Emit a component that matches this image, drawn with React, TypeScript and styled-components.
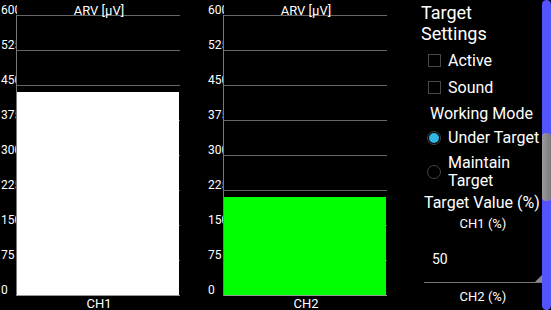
import React from 'react'
import styled, { createGlobalStyle } from 'styled-components'

const GlobalStyle = createGlobalStyle`
  html, body {
    margin: 0;
    padding: 0;
    background: #000;
  }
  body {
    font-family: Roboto, "Noto Sans", sans-serif;
    color: #fff;
  }
`

const Screen = styled.div`
  display: flex;
  width: 551px;
  height: 310px;
  overflow: hidden;
  background: #000;
`

const ChartPanel = styled.div`
  width: 207px;
  flex: none;
  display: flex;
  flex-direction: column;
`

const ChartTitle = styled.div`
  height: 15px;
  line-height: 21px;
  font-size: 13px;
  margin-left: 17px;
  width: 164px;
  text-align: center;
  white-space: nowrap;
  position: relative;
  z-index: 1;
`

const ChartBody = styled.div`
  display: flex;
  height: 296px;
  margin-top: -15px;
`

const YAxis = styled.div`
  width: 17px;
  height: 296px;
  padding: 3px 0 0 1px;
  box-sizing: border-box;
  overflow: hidden;
  flex: none;
`

const YLabel = styled.div`
  height: 35px;
  line-height: 15px;
  font-size: 12px;
  white-space: nowrap;
`

const Plot = styled.div`
  position: relative;
  width: 163px;
  height: 280px;
  margin: 15px 0 0 -1px;
  border-left: 1px solid #777;
  border-bottom: 1px solid #999;
  background: #000;
  display: flex;
  flex-direction: column;
`

const GridRow = styled.div`
  height: 34px;
  border-top: 1px solid #666;
`

const Bar = styled.div<{ $color: string }>`
  position: absolute;
  left: 0;
  right: 1px;
  bottom: 0;
  background: ${p => p.$color};
`

const ChannelLabel = styled.div`
  margin-left: 17px;
  width: 164px;
  text-align: center;
  font-size: 13px;
  line-height: 16px;
`

const Settings = styled.div`
  width: 128px;
  flex: none;
  display: flex;
  flex-direction: column;
`

const SettingsTitle = styled.div`
  font-size: 18px;
  line-height: 21px;
  margin: 2px 0 0 7px;
  height: 45px;
`

const CheckRow = styled.div`
  display: flex;
  align-items: center;
  height: 27px;
  padding-left: 14px;
  font-size: 16px;
  gap: 7px;
`

const CheckBox = styled.span`
  width: 11px;
  height: 11px;
  border: 1.5px solid #484848;
  flex: none;
`

const SectionLabel = styled.div<{ $indent: number }>`
  font-size: 16px;
  line-height: ${p => (p.$indent === 16 ? 25 : 20)}px;
  padding-left: ${p => p.$indent}px;
  white-space: nowrap;
`

const RadioRow = styled.div<{ $tall?: boolean }>`
  display: flex;
  align-items: center;
  gap: 7px;
  padding-left: 13px;
  font-size: 16px;
  line-height: ${p => (p.$tall ? 18 : 23)}px;
  padding-top: ${p => (p.$tall ? 5 : 0)}px;
  padding-bottom: ${p => (p.$tall ? 3 : 0)}px;
`

const Radio = styled.span<{ $checked?: boolean }>`
  width: 12px;
  height: 12px;
  border-radius: 50%;
  border: 1.5px solid #444;
  flex: none;
  display: flex;
  align-items: center;
  justify-content: center;
  &::after {
    content: '';
    width: 10px;
    height: 10px;
    border-radius: 50%;
    background: ${p => (p.$checked ? '#33b5e5' : 'transparent')};
  }
`

const FieldLabel = styled.div<{ $top: number }>`
  margin: ${p => p.$top}px 0 0 10px;
  text-align: center;
  font-size: 13px;
  line-height: 16px;
`

const Field = styled.div`
  position: relative;
  margin-left: 10px;
  padding: 17px 0 13px 8px;
  font-size: 14px;
  line-height: 20px;
  border-bottom: 1px solid #777;
`

const Corner = styled.svg`
  position: absolute;
  right: 0;
  bottom: 0;
`

const ScrollTrack = styled.div`
  width: 9px;
  flex: none;
  height: 310px;
  border-radius: 5px;
  background: #5353ff;
  display: flex;
  flex-direction: column;
`

const ScrollThumb = styled.div`
  margin-top: 133px;
  height: 68px;
  border-radius: 4px;
  background: linear-gradient(90deg, #9a9a9a, #7a7a7a);
`

const TICKS = [600, 525, 450, 375, 300, 225, 150, 75, 0]

const Chart = ({ name, value, color }: { name: string; value: number; color: string }) => (
  <ChartPanel>
    <ChartTitle>ARV [µV]</ChartTitle>
    <ChartBody>
      <YAxis>
        {TICKS.map(t => (
          <YLabel key={t}>{t}</YLabel>
        ))}
      </YAxis>
      <Plot>
        {TICKS.slice(1).map(t => (
          <GridRow key={t} />
        ))}
        <Bar $color={color} style={{ height: `${(value / 600) * 280}px` }} />
      </Plot>
    </ChartBody>
    <ChannelLabel>{name}</ChannelLabel>
  </ChartPanel>
)

export default function App() {
  return (
    <>
      <GlobalStyle />
      <Screen>
        <Chart name="CH1" value={435} color="#ffffff" />
        <Chart name="CH2" value={210} color="#00ff00" />
        <Settings>
          <SettingsTitle>
            Target
            <br />
            Settings
          </SettingsTitle>
          <CheckRow>
            <CheckBox />
            Active
          </CheckRow>
          <CheckRow>
            <CheckBox />
            Sound
          </CheckRow>
          <SectionLabel $indent={16}>Working Mode</SectionLabel>
          <RadioRow>
            <Radio $checked />
            Under Target
          </RadioRow>
          <RadioRow $tall>
            <Radio />
            <span>
              Maintain
              <br />
              Target
            </span>
          </RadioRow>
          <SectionLabel $indent={10}>Target Value (%)</SectionLabel>
          <FieldLabel $top={3}>CH1 (%)</FieldLabel>
          <Field>
            50
            <Corner width="7" height="7" viewBox="0 0 7 7">
              <polygon points="7,0 7,7 0,7" fill="#8a8a8a" />
            </Corner>
          </Field>
          <FieldLabel $top={6}>CH2 (%)</FieldLabel>
        </Settings>
        <ScrollTrack>
          <ScrollThumb />
        </ScrollTrack>
      </Screen>
    </>
  )
}
